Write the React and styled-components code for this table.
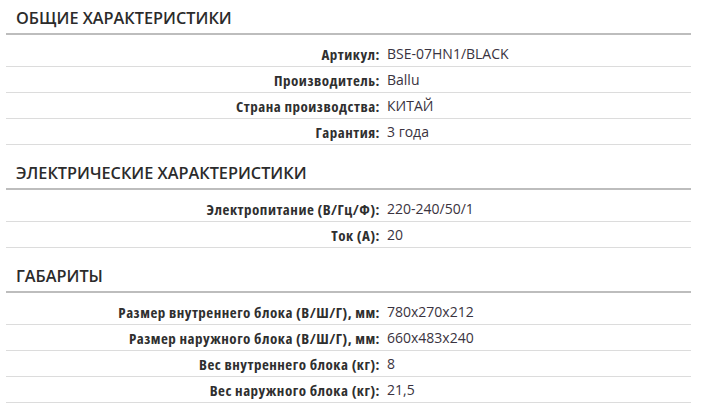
import styled, { createGlobalStyle } from 'styled-components';

const sections = [
  {
    title: 'Общие характеристики',
    rows: [
      ['Артикул', 'BSE-07HN1/BLACK'],
      ['Производитель', 'Ballu'],
      ['Страна производства', 'КИТАЙ'],
      ['Гарантия', '3 года'],
    ],
  },
  {
    title: 'Электрические характеристики',
    rows: [
      ['Электропитание (В/Гц/Ф)', '220-240/50/1'],
      ['Ток (А)', '20'],
    ],
  },
  {
    title: 'Габариты',
    rows: [
      ['Размер внутреннего блока (В/Ш/Г), мм', '780x270x212'],
      ['Размер наружного блока (В/Ш/Г), мм', '660x483x240'],
      ['Вес внутреннего блока (кг)', '8'],
      ['Вес наружного блока (кг)', '21,5'],
    ],
  },
];

function App() {
  return (
    <>
      <GlobalStyle />
      <Page>
        {sections.map((section) => (
          <Section key={section.title}>
            <Title>{section.title}</Title>
            <Table>
              {section.rows.map(([label, value]) => (
                <Row key={label}>
                  <Label>{label}:</Label>
                  <Value>{value}</Value>
                </Row>
              ))}
            </Table>
          </Section>
        ))}
      </Page>
    </>
  );
}

const GlobalStyle = createGlobalStyle`
  body {
    margin: 0;
    background: #fff;
    font-family: 'Open Sans', 'Noto Sans', sans-serif;
    color: #333;
  }
`;

const Page = styled.div`
  width: 685px;
  padding: 0 0 0 6px;
`;

const Section = styled.section`
  padding-top: 8px;

  & + & {
    padding-top: 18px;
  }
`;

const Title = styled.h2`
  margin: 0;
  padding: 0 0 5px 10px;
  font-size: 16.3px;
  line-height: 20px;
  font-weight: 600;
  text-transform: uppercase;
  color: #2b2b2b;
  border-bottom: 2px solid #bdbdbd;
`;

const Table = styled.div`
  padding-top: 6px;
`;

const Row = styled.div`
  display: grid;
  grid-template-columns: 374px 1fr;
  column-gap: 7px;
  align-items: center;
  height: 25px;
  border-bottom: 1px solid #dcdcdc;
  font-size: 14px;
`;

const Label = styled.div`
  text-align: right;
  font-size: 15px;
  font-weight: 700;
  font-stretch: 87.5%;
  letter-spacing: 0.5px;
  color: #2f2f2f;
  white-space: nowrap;
`;

const Value = styled.div`
  color: #3a3340;
`;

export default App;
